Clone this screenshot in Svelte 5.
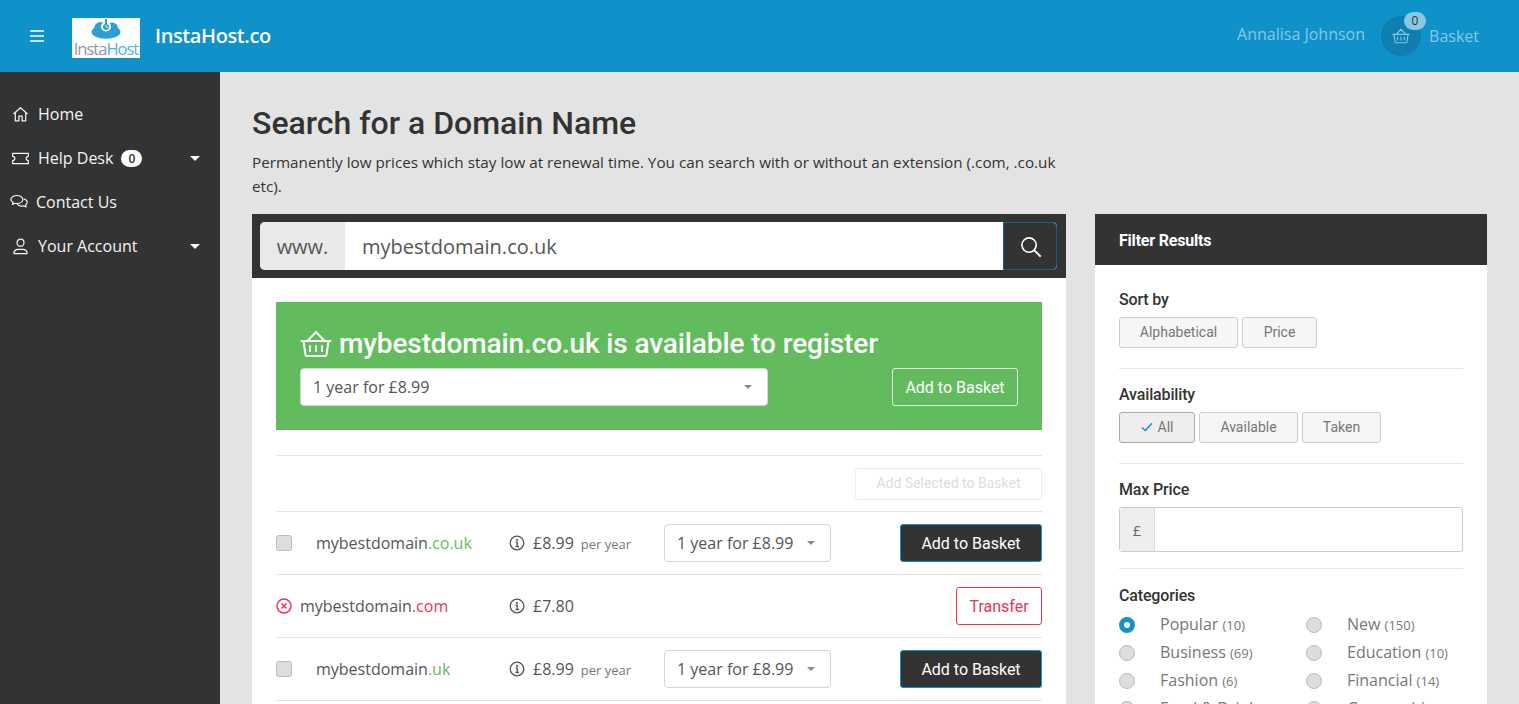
<script>
  const rows = [
    { name: 'mybestdomain', ext: '.co.uk', price: '£8.99', ok: true },
    { name: 'mybestdomain', ext: '.com', price: '£7.80', ok: false },
    { name: 'mybestdomain', ext: '.uk', price: '£8.99', ok: true }
  ];
  const cats = [
    ['Popular', 10, true], ['New', 150, false],
    ['Business', 69, false], ['Education', 10, false],
    ['Fashion', 6, false], ['Financial', 14, false],
    ['Food & Drink', 12, false], ['Geographic', 22, false]
  ];
</script>

{#snippet basket(cls)}
  <svg class={cls} viewBox="0 0 32 28" fill="none" stroke="currentColor" stroke-width="2" stroke-linecap="round" stroke-linejoin="round">
    <path d="M1.500 11h29" /><path d="M3.500 11l2 14a1.500 1.500 0 0 0 1.500 1h18a1.500 1.500 0 0 0 1.500-1l2-14" />
    <path d="M7.500 11l8.500-9 8.500 9" /><path d="M10 16v5M16 16v5M22 16v5" />
  </svg>
{/snippet}

{#snippet info()}
  <svg class="info" viewBox="0 0 16 16" fill="none" stroke="currentColor" stroke-width="1.300">
    <circle cx="8" cy="8" r="6.800" /><path d="M6.500 7.200H8.200V11.500M6.500 11.500H10" /><path d="M8 4v1.800" stroke-width="1.800" />
  </svg>
{/snippet}

{#snippet caret()}
  <span class="caret"></span>
{/snippet}

<div class="page">
  <header class="top">
    <div class="brand">
      <svg class="burger" viewBox="0 0 14 12" stroke="currentColor" stroke-width="1.500"><path d="M0 1h14M0 6h14M0 11h14" /></svg>
      <div class="logo">
        <svg class="cloud" viewBox="0 0 30 20">
          <ellipse cx="15" cy="13" rx="14.500" ry="6.800" fill="#2d9fd3" />
          <circle cx="9.500" cy="9.500" r="6.500" fill="#2d9fd3" />
          <circle cx="21" cy="9.500" r="6" fill="#2d9fd3" />
          <circle cx="15" cy="7.500" r="5" fill="#fff" />
          <circle cx="15" cy="8" r="3" fill="#2d9fd3" />
          <rect x="14" y="0" width="2" height="6" fill="#2d9fd3" />
          <path d="M15 6v2.200h2" stroke="#fff" stroke-width="0.800" fill="none" />
        </svg>
        <div class="logotext"><span>Insta</span><b>Host</b></div>
      </div>
      <div class="sitename">InstaHost.co</div>
    </div>
    <div class="user">
      <span class="uname">Annalisa Johnson</span>
      <span class="cart">{@render basket('cart-i')}<span class="cart-n">0</span></span>
      <span class="blabel">Basket</span>
    </div>
  </header>

  <div class="shell">
    <nav class="side">
      <a class="nav">
        <svg class="ni" viewBox="0 0 18 18" fill="none" stroke="currentColor" stroke-width="1.300" stroke-linejoin="round"><path d="M1.500 8.500L9 1.800l7.500 6.700M3.500 7v8.800h3.800v-5h3.400v5h3.800V7" /></svg>
        <span>Home</span>
      </a>
      <a class="nav">
        <svg class="ni" viewBox="0 0 18 18" fill="none" stroke="currentColor" stroke-width="1.300" stroke-linejoin="round"><path d="M0.700 3.500h16.600v3.200a2.300 2.300 0 0 0 0 4.600v3.200H0.700v-3.200a2.300 2.300 0 0 0 0-4.600z" /></svg>
        <span>Help Desk</span><span class="pill">0</span>{@render caret()}
      </a>
      <a class="nav tight">
        <svg class="ni" viewBox="0 0 18 18" fill="none" stroke="currentColor" stroke-width="1.200" stroke-linejoin="round"><path d="M7 2.500c3.200 0 5.800 1.700 5.800 4s-2.600 4-5.800 4c-.7 0-1.300-.1-1.900-.2L2.500 11.500l.5-2.200C1.700 8.600.8 7.600.8 6.500c0-2.300 2.800-4 6.200-4z" /><path d="M13.600 5.800c2 .5 3.600 1.800 3.600 3.500 0 1-.6 2-1.600 2.600l.6 2.100-2.500-1.200c-2.300.5-5.400 0-6.600-1.800" /></svg>
        <span>Contact Us</span>
      </a>
      <a class="nav">
        <svg class="ni" viewBox="0 0 18 18" fill="none" stroke="currentColor" stroke-width="1.300" stroke-linejoin="round"><circle cx="9" cy="5" r="3.700" /><path d="M3 16.500h12c.8 0 1.200-.5 1-1.200-.6-2-2-3.300-4-3.300H6c-2 0-3.400 1.300-4 3.300-.2.700.2 1.200 1 1.200z" /></svg>
        <span>Your Account</span>{@render caret()}
      </a>
    </nav>

    <main class="main">
      <h1>Search for a Domain Name</h1>
      <p class="lead">Permanently low prices which stay low at renewal time. You can search with or without an extension (.com, .co.uk etc).</p>

      <div class="cols">
        <section class="results">
          <div class="searchbar">
            <div class="sgroup">
              <span class="www">www.</span>
              <span class="sinput">mybestdomain.co.uk</span>
              <span class="sbtn">
                <svg viewBox="0 0 22 22" fill="none" stroke="currentColor" stroke-width="1.700" stroke-linecap="round"><circle cx="9.500" cy="9.500" r="7.500" /><path d="M15 15l6 6" stroke-width="2" /></svg>
              </span>
            </div>
          </div>
          <div class="rbody">
            <div class="hero">
              <div class="hero-title">{@render basket('hero-i')}<span>mybestdomain.co.uk is available to register</span></div>
              <div class="hero-row">
                <div class="select wide"><span>1 year for £8.99</span>{@render caret()}</div>
                <button class="btn ghost">Add to Basket</button>
              </div>
            </div>
            <div class="bulk"><button class="btn disabled">Add Selected to Basket</button></div>
            {#each rows as r}
              <div class="row">
                {#if r.ok}
                  <span class="check"></span>
                  <span class="dom pad">{r.name}<em class="good">{r.ext}</em></span>
                {:else}
                  <svg class="xc" viewBox="0 0 16 16" fill="none" stroke="#e8364f" stroke-width="1.500"><circle cx="8" cy="8" r="7" /><path d="M5.500 5.500l5 5M10.500 5.500l-5 5" /></svg>
                  <span class="dom">{r.name}<em class="bad">{r.ext}</em></span>
                {/if}
                <span class="price">{@render info()}<span class="amt">{r.price}</span>{#if r.ok}<small>per year</small>{/if}</span>
                {#if r.ok}
                  <div class="select"><span>1 year for £8.99</span>{@render caret()}</div>
                  <button class="btn dark">Add to Basket</button>
                {:else}
                  <button class="btn danger">Transfer</button>
                {/if}
              </div>
            {/each}
          </div>
        </section>

        <aside class="filter">
          <div class="fhead">Filter Results</div>
          <div class="fbody">
            <div class="fsec">
              <h4>Sort by</h4>
              <div class="tags"><button class="tag w119">Alphabetical</button><button class="tag w75">Price</button></div>
            </div>
            <div class="fsec">
              <h4>Availability</h4>
              <div class="tags">
                <button class="tag on w76">
                  <svg viewBox="0 0 14 12" fill="none" stroke="#1591c9" stroke-width="1.700"><path d="M1 6.500l3.800 3.800L13 1.500" /></svg>All
                </button>
                <button class="tag w99">Available</button><button class="tag w79">Taken</button>
              </div>
            </div>
            <div class="fsec short">
              <h4>Max Price</h4>
              <div class="money"><span>£</span><i></i></div>
            </div>
            <div class="fsec last">
              <h4>Categories</h4>
              <div class="cats">
                {#each cats as c}
                  <label class="cat"><span class="radio" class:sel={c[2]}></span><span class="cname">{c[0]} <small>({c[1]})</small></span></label>
                {/each}
              </div>
            </div>
          </div>
        </aside>
      </div>
    </main>
  </div>
</div>

<style>
  :global(body) { margin: 0; font-family: "Open Sans", sans-serif; color: #333; }
  .page { height: 704px; overflow: hidden; background: #e3e3e3; }
  .top { height: 72px; background: #0f92c9; display: flex; justify-content: space-between; align-items: center; padding: 0 40px 0 30px; color: #fff; }
  .brand { display: flex; align-items: center; }
  .burger { width: 14px; height: 12px; margin-right: 28px; }
  .logo { width: 68px; height: 40px; margin-top: 3px; background: #fff; display: flex; flex-direction: column; align-items: center; }
  .cloud { width: 30px; height: 20px; margin-top: 1px; flex: none; }
  .logotext { font: 16.500px/18px "Open Sans", sans-serif; letter-spacing: -1px; color: #8b9aa3; margin-top: 1px; }
  .logotext b { font-weight: 400; color: #4fb3e0; }
  .sitename { font-size: 20px; font-weight: 600; margin-left: 15px; letter-spacing: -0.400px; position: relative; top: -1px; }
  .user { display: flex; align-items: center; color: #87c8e4; font-size: 16px; }
  .uname { margin-right: 16px; position: relative; top: -2px; }
  .cart { position: relative; width: 40px; height: 40px; border-radius: 50%; background: #0e7fb0; display: flex; align-items: center; justify-content: center; margin-right: 8px; }
  .cart-i { width: 18px; height: 16px; }
  .cart-n { position: absolute; left: 23px; top: -4px; width: 22px; height: 18px; border-radius: 9px; background: #87c8e4; color: #333; font-size: 12px; line-height: 18px; text-align: center; }

  .shell { display: flex; height: 632px; }
  .side { width: 220px; flex: none; background: #333; padding-top: 20px; box-sizing: border-box; color: #f4f4f4; font-size: 16px; }
  .nav { height: 44px; display: flex; align-items: center; padding: 0 20px 0 12px; }
  .ni { width: 17px; height: 17px; margin-right: 9px; flex: none; }
  .nav.tight .ni { margin-left: -2px; margin-right: 8px; width: 18px; height: 18px; }
  .pill { background: #fff; color: #333; font-size: 12px; width: 21px; height: 17px; line-height: 17px; border-radius: 9px; text-align: center; margin-left: 8px; font-weight: 600; }
  .caret { width: 0; height: 0; border: 5px solid transparent; border-top-color: currentColor; border-bottom: 0; margin-left: auto; }

  .main { flex: 1; padding: 32px 32px 0; min-width: 0; }
  h1 { margin: 0; font: 500 32px/38px Roboto, sans-serif; color: #333; }
  .lead { margin: 8px 0 16px; width: 815px; font-size: 15.260px; line-height: 24px; color: #333; }
  .cols { display: flex; gap: 29px; align-items: flex-start; }
  .results { width: 814px; flex: none; background: #fff; }
  .searchbar { background: #333; padding: 8px 9px 8px 8px; }
  .sgroup { display: flex; height: 48px; background: #fff; border-radius: 5px; font-size: 20px; color: #555; }
  .www { width: 85px; background: #e9e9e9; border-radius: 5px 0 0 5px; display: flex; align-items: center; justify-content: center; padding-top: 1px; box-sizing: border-box; }
  .sinput { flex: 1; display: flex; align-items: center; padding: 1px 0 0 17px; }
  .sbtn { width: 54px; box-sizing: border-box; background: #333; border: 1px solid #11608a; border-radius: 0 5px 5px 0; color: #fff; display: flex; align-items: center; justify-content: center; }
  .sbtn svg { width: 21px; height: 21px; }
  .rbody { padding: 24px; }
  .hero { height: 128px; box-sizing: border-box; background: #62bc5e; padding: 25px 24px 0; color: #fff; }
  .hero-title { display: flex; align-items: center; font: 500 28px/34px Roboto, sans-serif; letter-spacing: -0.120px; height: 34px; }
  .hero-i { width: 32px; height: 28px; margin-right: 7px; }
  .hero-row { display: flex; justify-content: space-between; margin-top: 7px; }
  .select { box-sizing: border-box; width: 167px; height: 38px; background: #fff; border: 1px solid #cfd4de; border-radius: 4px; display: flex; align-items: center; padding: 0 15px 0 12px; font-size: 16px; color: #555; }
  .select .caret { border-width: 4px; border-bottom: 0; border-top-color: #888; }
  .select.wide { width: 468px; }
  .btn { box-sizing: border-box; height: 38px; border-radius: 3px; font: 400 16px Roboto, sans-serif; padding: 0; cursor: pointer; }
  .ghost { width: 126px; background: transparent; color: #fff; border: 1px solid #e4f4e2; }
  .bulk { margin-top: 25px; border-top: 1px solid #e4e4e4; padding: 12px 0 11px; display: flex; justify-content: flex-end; }
  .disabled { width: 187px; height: 32px; background: #fff; border: 1px solid #eee; color: #ddd; font-size: 14px; padding-bottom: 2px; }
  .row { height: 63px; box-sizing: border-box; border-top: 1px solid #e4e4e4; display: flex; align-items: center; position: relative; font-size: 16px; color: #555; }
  .row:last-child { border-bottom: 1px solid #e4e4e4; height: 64px; }
  .check { width: 16px; height: 16px; box-sizing: border-box; border: 1px solid #bbb; border-radius: 3px; background: #ddd; flex: none; }
  .xc { width: 16px; height: 16px; flex: none; }
  .dom { margin-left: 8px; width: 209px; flex: none; }
  .dom.pad { margin-left: 24px; width: 193px; }
  .dom em { font-style: normal; }
  .good { color: #62bc5e; }
  .bad { color: #e8364f; }
  .price { display: flex; align-items: center; width: 155px; flex: none; }
  .info { width: 16px; height: 16px; color: #555; margin-right: 8px; }
  .price small { font-size: 13px; margin-left: 7px; color: #777; margin-top: 2px; }
  .row .btn { margin-left: auto; }
  .dark { width: 142px; background: #333; color: #fff; border: 1px solid #0f92c9; }
  .danger { width: 86px; background: #fff; color: #e8364f; border: 1px solid #e8364f; }

  .filter { width: 392px; flex: none; background: #fff; }
  .fhead { height: 51px; background: #333; color: #fff; font: 700 16px/53px Roboto, sans-serif; padding-left: 24px; letter-spacing: -0.200px; }
  .fbody { padding: 25px 24px 0; }
  .fsec { border-bottom: 1px solid #e6e6e6; padding-bottom: 20px; margin-bottom: 16px; }
  .fsec.short { padding-bottom: 16px; }
  .fsec.last { border: 0; }
  h4 { margin: 0 0 8px; font: 500 16px/19px Roboto, sans-serif; letter-spacing: -0.150px; color: #333; }
  .fsec.last h4 { position: relative; top: 1px; }
  .tags { display: flex; gap: 4px; height: 31px; }
  .tag { box-sizing: border-box; height: 31px; background: #f6f6f6; border: 1px solid #ccc; border-radius: 3px; color: #777; font: 400 14px Roboto, sans-serif; padding: 0 0 2px; display: flex; align-items: center; justify-content: center; }
  .tag svg { width: 12px; height: 10px; margin-right: 5px; }
  .tag.on { background: #eee; border-color: #aaa; }
  .w119 { width: 119px; } .w75 { width: 75px; } .w76 { width: 76px; } .w99 { width: 99px; } .w79 { width: 79px; }
  .money { display: flex; height: 45px; box-sizing: border-box; border: 1px solid #ccc; border-radius: 3px; }
  .money span { width: 34px; background: #eee; border-right: 1px solid #ddd; display: flex; align-items: center; justify-content: center; font-size: 15px; color: #666; }
  .cats { display: grid; grid-template-columns: 187px 1fr; grid-auto-rows: 28px; margin-top: -1px; }
  .cat { display: flex; align-items: center; font-size: 16px; color: #777; }
  .cname { position: relative; top: -1px; }
  .radio { width: 16px; height: 16px; box-sizing: border-box; border-radius: 50%; background: #ddd; border: 1px solid #bbb; margin-right: 25px; flex: none; }
  .radio.sel { background: #fff; border: 5px solid #1591c9; }
  .cname small { font-size: 13px; }
</style>
